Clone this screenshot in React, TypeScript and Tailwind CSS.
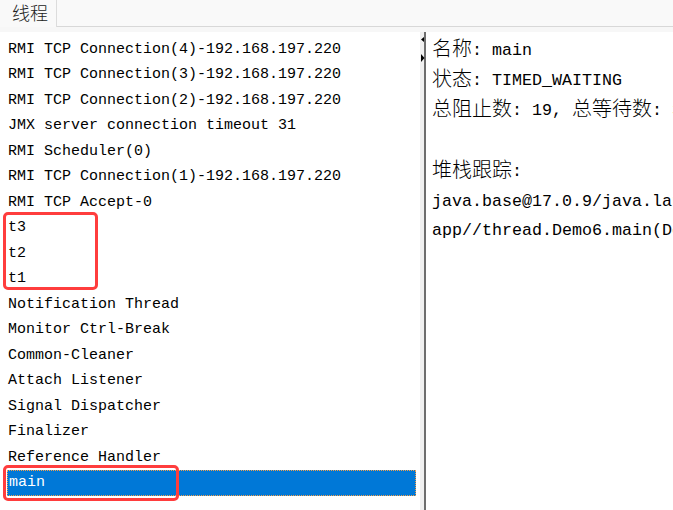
import React from "react";

const mono = { fontFamily: '"Liberation Mono", "DejaVu Sans Mono", monospace' } as const;

function C({ children }: { children: React.ReactNode }) {
  return (
    <span className="relative top-[1px] text-[20px] leading-none font-light [font-family:'Noto_Sans_CJK_SC',sans-serif]">
      {children}
    </span>
  );
}

const threads = [
  "RMI TCP Connection(4)-192.168.197.220",
  "RMI TCP Connection(3)-192.168.197.220",
  "RMI TCP Connection(2)-192.168.197.220",
  "JMX server connection timeout 31",
  "RMI Scheduler(0)",
  "RMI TCP Connection(1)-192.168.197.220",
  "RMI TCP Accept-0",
  "t3",
  "t2",
  "t1",
  "Notification Thread",
  "Monitor Ctrl-Break",
  "Common-Cleaner",
  "Attach Listener",
  "Signal Dispatcher",
  "Finalizer",
  "Reference Handler",
  "main",
];

function Line({ children, h = "h-[30px]" }: { children: React.ReactNode; h?: string }) {
  return <div className={`${h} leading-[30px] whitespace-pre`}>{children}</div>;
}

export default function App() {
  return (
    <div className="w-[673px] h-[510px] overflow-hidden bg-white flex flex-col relative">
      {/* header with tab */}
      <div className="h-[27px] bg-[#f9f9f9] flex shrink-0">
        <div className="w-[57px] h-[27px] border-r border-[#dcdcdc] pl-[12px] text-[18px] leading-[24px] text-[#222] font-light [font-family:'Noto_Sans_CJK_SC',sans-serif]">
          线程
        </div>
        <div className="flex-1 border-b border-[#d8d8d8]" />
      </div>
      <div className="h-[5px] bg-[#f7f7f7] shrink-0" />

      {/* body */}
      <div className="flex flex-1 min-h-0">
        {/* thread list */}
        <div className="w-[420px] bg-white pl-[7px] pr-[4px] pt-[4.5px] text-black text-[15px]" style={mono}>
          {threads.map((t, i) =>
            i === threads.length - 1 ? (
              <div
                key={i}
                className="h-[25.5px] leading-[23.5px] pl-[1px] bg-[#0078d7] text-white border border-dotted border-[#f5a04a] whitespace-nowrap"
              >
                {t}
              </div>
            ) : (
              <div key={i} className="h-[25.5px] leading-[25.5px] pl-[1px] whitespace-pre">
                {t}
              </div>
            )
          )}
        </div>

        {/* splitter */}
        <div className="w-[4px] bg-[#f0f0f0] relative">
          <svg className="absolute left-[1px] top-[5px]" width="4" height="26" viewBox="0 0 4 26">
            <polygon points="3,0 0,2.5 3,5" fill="#000" />
            <polygon points="0,17 3.5,21 0,25" fill="#000" />
          </svg>
        </div>
        <div className="w-[2px] bg-[#6e6e6e]" />

        {/* details */}
        <div
          className="flex-1 min-w-0 overflow-hidden bg-white pl-[6px] pt-[4px] text-black text-[16.67px] leading-[30px]"
          style={mono}
        >
          <Line>
            <C>名称</C>: main
          </Line>
          <Line>
            <C>状态</C>: TIMED_WAITING
          </Line>
          <Line h="h-[30.5px]">
            <C>总阻止数</C>: 19, <C>总等待数</C>: 3
          </Line>
          <Line h="h-[30.5px]"> </Line>
          <Line>
            <C>堆栈跟踪</C>:
          </Line>
          <Line h="h-[29px]">java.base@17.0.9/java.lang.Thread.sleep(Native Method)</Line>
          <Line h="h-[29px]">app//thread.Demo6.main(Demo6.java:20)</Line>
        </div>
      </div>

      {/* red annotation boxes */}
      <div className="absolute left-[3px] top-[212px] w-[95px] h-[78px] border-[3px] border-[#ff3d3d] rounded-[5px]" />
      <div className="absolute left-[3px] top-[465px] w-[176px] h-[36px] border-[3px] border-[#ff3d3d] rounded-[5px]" />
    </div>
  );
}
